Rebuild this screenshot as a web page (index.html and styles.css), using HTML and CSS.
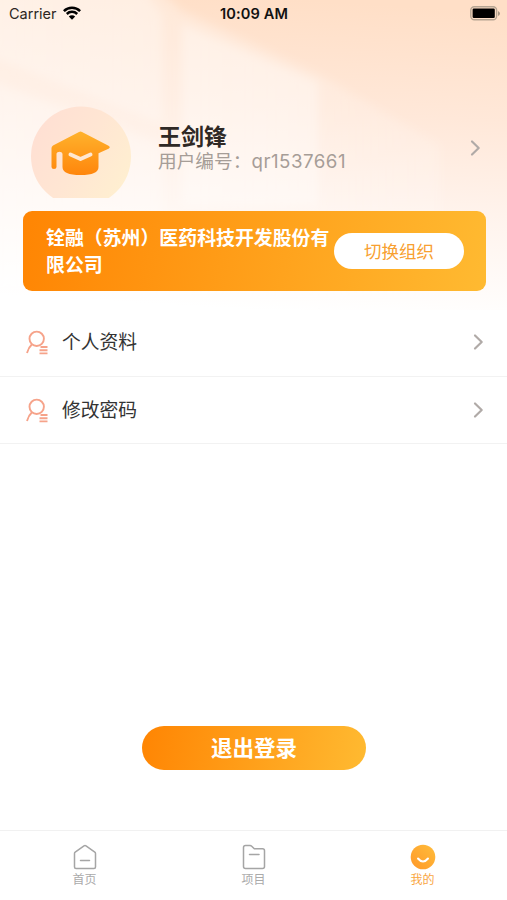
FILE: index.html
```html
<!DOCTYPE html>
<html lang="zh-CN">
<head>
<meta charset="utf-8">
<title>我的</title>
<link rel="stylesheet" href="styles.css">
</head>
<body>
<div class="app">
  <svg class="backdrop" viewBox="0 0 507 310" preserveAspectRatio="none" aria-hidden="true">
    <defs>
      <linearGradient id="base" x1="0.6" y1="0" x2="0.5" y2="1">
        <stop offset="0" stop-color="#ffdfc7"/><stop offset=".35" stop-color="#ffe8d9"/><stop offset=".65" stop-color="#fff3ec"/><stop offset="1" stop-color="#fff"/>
      </linearGradient>
      <linearGradient id="fade" x1="0" y1="0" x2="1" y2="0">
        <stop offset="0" stop-color="#fff" stop-opacity=".4"/><stop offset="1" stop-color="#fff" stop-opacity=".15"/>
      </linearGradient>
      <filter id="soft" x="-20%" y="-20%" width="140%" height="140%"><feGaussianBlur stdDeviation="5"/></filter>
    </defs>
    <rect width="507" height="310" fill="url(#base)"/>
    <g filter="url(#soft)" fill="#fff">
      <path d="M-30-30H140L180 10L320 75L440 145V300H-30Z" fill="url(#fade)"/>
      <path d="M-30-30H130L162 15V124L-30 48Z" opacity=".25"/>
      <path d="M182 24L318 82V205H182Z" opacity=".32"/>
      <path d="M-30 74L162 144V290H-30Z" opacity=".25"/>
    </g>
  </svg>

  <header class="status">
    <div class="carrier"><span>Carrier</span>
      <svg width="18" height="14" viewBox="0 0 18 14" fill="none" stroke="#000" stroke-width="2.5"><path d="M.9 5.1A11.4 11.4 0 0 1 17.1 5.1M3.8 8A7.4 7.4 0 0 1 14.2 8"/><path d="M9 13.8L5.8 10.5A4.5 4.5 0 0 1 12.2 10.5Z" fill="#000" stroke="none"/></svg>
    </div>
    <div class="time">10:09 AM</div>
    <svg class="battery" width="31" height="15" viewBox="0 0 31 15"><rect x=".8" y=".8" width="25.8" height="13" rx="3.5" fill="none" stroke="#b5a492" stroke-width="1.4"/><rect x="2.6" y="2.600" width="22.2" height="9.4" rx="1.2"/><path d="M28 5v5q2-1 2-2.500t-2-2.500Z" fill="#a79786"/></svg>
  </header>

  <section class="profile">
    <svg class="avatar" width="101" height="92" viewBox="0 0 101 92">
      <defs>
        <linearGradient id="disc" x1="0" y1=".2" x2="1" y2=".8"><stop offset="0" stop-color="#ffdfd3"/><stop offset=".5" stop-color="#ffe6d3"/><stop offset="1" stop-color="#fff0d0"/></linearGradient>
        <linearGradient id="cap" x1="0" y1="0" x2="0" y2="1"><stop offset="0" stop-color="#ffb22c"/><stop offset="1" stop-color="#ff860c"/></linearGradient>
      </defs>
      <circle cx="50" cy="50.500" r="50" fill="url(#disc)"/>
      <path fill="url(#cap)" d="M48 26Q49.500 25.200 51 26L77.500 39.800Q80 41.300 77.500 42.800L67.500 47.300V61Q67.500 69 49.500 69T31.500 61V47.800Q31 45.800 28.500 45.800T25.500 47.500V61Q25.500 63 23 63T20.500 61V42Q20.500 40.500 22 39.500Z"/>
      <path d="M39.500 48.500L49.500 53L59.500 48.500" fill="none" stroke="#ffe7d1" stroke-width="4" stroke-linecap="round" stroke-linejoin="round"/>
    </svg>
    <div class="identity">
      <div class="name">王剑锋</div>
      <div class="uid">用户编号：<span class="code">qr1537661</span></div>
    </div>
    <svg class="chevron" width="12" height="18" viewBox="0 0 12 18"><path d="M2 2.500L8.700 9L2 15.500"/></svg>
  </section>

  <section class="org">
    <div class="org-name">铨融（苏州）医药科技开发股份有限公司</div>
    <button class="switch">切换组织</button>
  </section>

  <nav class="menu">
    <a class="row">
      <svg class="user" width="24" height="26" viewBox="0 0 24 26"><circle cx="11.700" cy="8.800" r="7.200"/><path d="M7 14.300Q3.500 17.500 2 23M15.500 17H22.500M14.500 20.200H22.500M14.500 23.400H22.500"/></svg>
      <span>个人资料</span>
      <svg class="chevron" width="12" height="18" viewBox="0 0 12 18"><path d="M2 2.500L8.700 9L2 15.500"/></svg>
    </a>
    <a class="row">
      <svg class="user" width="24" height="26" viewBox="0 0 24 26"><circle cx="11.700" cy="8.800" r="7.200"/><path d="M7 14.300Q3.500 17.500 2 23M15.500 17H22.500M14.500 20.200H22.500M14.500 23.400H22.500"/></svg>
      <span>修改密码</span>
      <svg class="chevron" width="12" height="18" viewBox="0 0 12 18"><path d="M2 2.500L8.700 9L2 15.500"/></svg>
    </a>
  </nav>

  <button class="logout">退出登录</button>

  <footer class="tabs">
    <a class="tab">
      <svg width="26" height="26" viewBox="0 0 26 26"><path d="M2.500 9.500Q2.500 8.700 3.200 8.200L12 1.900Q13 1.200 14 1.900L22.800 8.200Q23.500 8.700 23.500 9.500V23Q23.500 24.500 22 24.500H4Q2.500 24.500 2.500 23ZM8.500 16.500H17.500"/></svg>
      <span>首页</span>
    </a>
    <a class="tab">
      <svg width="26" height="26" viewBox="0 0 26 26"><path d="M2.500 3.500Q2.500 1.500 4.500 1.500H9Q10 1.500 10.700 2.200L13.300 4.800H21.500Q23.500 4.800 23.500 6.800V22.500Q23.500 24.500 21.500 24.500H4.500Q2.500 24.500 2.500 22.500ZM8.500 10.500H18"/></svg>
      <span>项目</span>
    </a>
    <a class="tab active">
      <svg width="26" height="26" viewBox="0 0 26 26"><defs><linearGradient id="face" x1="1" y1="0" x2="0" y2="1"><stop offset="0" stop-color="#ffbd3b"/><stop offset="1" stop-color="#ff9828"/></linearGradient></defs><circle cx="13" cy="13" r="12.300" fill="url(#face)" stroke="none"/><path d="M8 14.500Q13 20.500 18 14.500" stroke="#fff" stroke-width="2"/></svg>
      <span>我的</span>
    </a>
  </footer>
</div>
</body>
</html>
```
FILE: styles.css
```css
* { box-sizing: border-box; }
body { margin: 0; background: #fff; font-family: Inter, "Noto Sans CJK SC", sans-serif; color: #333; }
button { border: 0; padding: 0; font: inherit; }
svg { display: block; flex: none; }

.app { position: relative; width: 507px; height: 900px; display: flex; flex-direction: column; overflow: hidden; isolation: isolate; }
.backdrop { position: absolute; z-index: -1; top: 0; left: 0; width: 507px; height: 310px; }

.status { height: 28px; padding: 0 6px 0 9px; display: grid; grid-template-columns: 1fr auto 1fr; align-items: center; font-size: 14.500px; line-height: 28px; color: #2c2622; }
.carrier { display: flex; align-items: center; gap: 6px; }
.carrier svg { margin-top: -2px; }
.time { margin-left: -2px; font-weight: 600; color: #111; font-size: 14.600px; letter-spacing: .1px; }
.battery { justify-self: end; margin-top: -2px; }

.profile { height: 92px; margin-top: 78px; padding: 0 25px 0 31px; display: flex; align-items: flex-start; }
.identity { flex: 1; margin-left: 26px; padding-top: 17px; }
.name { font-size: 23px; line-height: 28px; font-weight: 600; color: #2f2925; }
.uid { font-size: 18.700px; line-height: 22px; color: #a69d97; white-space: nowrap; }
.code { letter-spacing: .5px; }
.chevron { fill: none; stroke: #b0aaa7; stroke-width: 2.200; stroke-linecap: round; stroke-linejoin: round; }
.profile .chevron { margin-top: 33px; }

.org { height: 80px; margin: 13px 21.500px 0 22.500px; padding: 2px 21px 0 23.500px; display: flex; align-items: center; border-radius: 9px; background: linear-gradient(100deg, #ff8503, #ffba31); }
.org-name { width: 287px; flex: none; font-size: 18.900px; line-height: 27px; font-weight: 700; color: #fff; }
.switch { width: 130px; height: 36px; margin: -2px 0 0 1px; flex: none; border-radius: 18px; background: #fff; color: #f8a030; font-size: 17.500px; line-height: 37px; }

.menu { margin-top: 17px; }
.row { height: 69px; padding: 2px 22px 0 25px; display: flex; align-items: center; border-bottom: 1px solid #f2f2f2; font-size: 18.800px; line-height: 28px; }
.row + .row { height: 67px; }
.row span { flex: 1; margin-left: 13px; }
.row .chevron { margin-top: -2px; }
.user { margin-top: -1px; fill: none; stroke: #f6a38a; stroke-width: 1.900; stroke-linecap: butt; }

.logout { width: 224px; height: 44px; margin: 281.500px 0 0 142px; border-radius: 22px; background: linear-gradient(100deg, #ff8503, #ffba31); color: #fff; font-size: 21.500px; line-height: 45px; font-weight: 700; }

.tabs { height: 70px; margin-top: auto; border-top: 1px solid #f1f1f1; display: grid; grid-template-columns: repeat(3, 1fr); }
.tab { display: flex; flex-direction: column; align-items: center; padding-top: 13px; font-size: 12px; line-height: 19px; color: #aaa; }
.tab svg { fill: none; stroke: #a5a5a5; stroke-width: 1.500; stroke-linecap: round; stroke-linejoin: round; }
.active { color: #f9a63f; }
```
